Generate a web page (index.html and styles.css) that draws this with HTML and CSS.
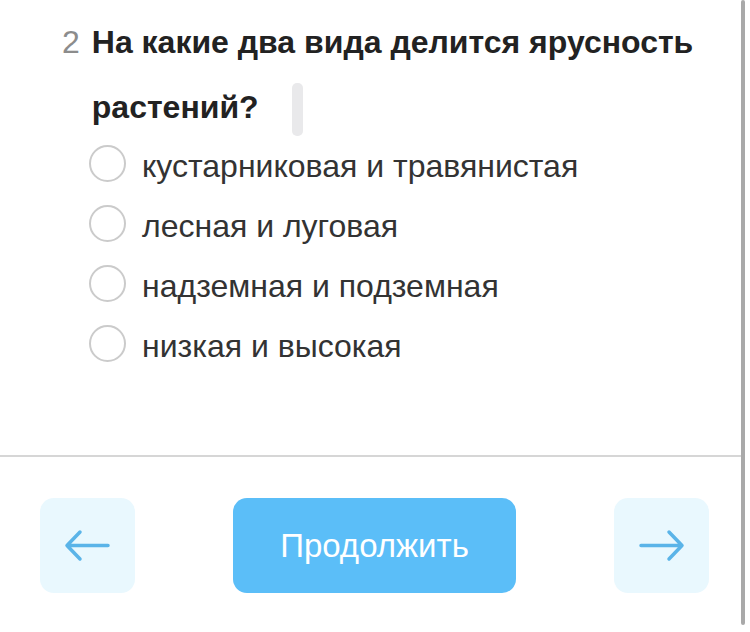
FILE: index.html
```html
<!DOCTYPE html>
<html lang="ru">
<head>
    <meta charset="UTF-8">
    <meta name="viewport" content="width=device-width, initial-scale=1.0">
    <title>Тест</title>
    <link rel="stylesheet" href="styles.css">
</head>
<body>

    <div class="quiz">
        <div class="question">
            <span class="question-num">2</span>
            <p class="question-text">На какие два вида делится ярусность растений?<span class="caret"></span></p>
        </div>

        <div class="answers">
            <label class="answer"><span class="radio"></span><span class="answer-text">кустарниковая и травянистая</span></label>
            <label class="answer"><span class="radio"></span><span class="answer-text">лесная и луговая</span></label>
            <label class="answer"><span class="radio"></span><span class="answer-text">надземная и подземная</span></label>
            <label class="answer"><span class="radio"></span><span class="answer-text">низкая и высокая</span></label>
        </div>
    </div>

    <div class="footer">
        <button class="nav-btn" aria-label="Назад">
            <svg width="95" height="95" viewBox="0 0 95 95">
                <path d="M27 47.5 H68 M40 34 L27 47.5 L40 61" fill="none" stroke="#5ab4e8" stroke-width="3.5" stroke-linecap="round" stroke-linejoin="round"/>
            </svg>
        </button>
        <button class="next-btn">Продолжить</button>
        <button class="nav-btn" aria-label="Вперёд">
            <svg width="95" height="95" viewBox="0 0 95 95">
                <path d="M27 47.5 H68 M55 34 L68 47.5 L55 61" fill="none" stroke="#5ab4e8" stroke-width="3.5" stroke-linecap="round" stroke-linejoin="round"/>
            </svg>
        </button>
    </div>

    <div class="scroll-thumb"></div>

</body>
</html>
```

FILE: styles.css
```css
body {
    margin: 0;
    font-family: 'Liberation Sans', Arial, sans-serif;
    background: #fff;
    color: #2b2b2b;
    width: 750px;
    height: 632px;
    overflow: hidden;
}
.quiz {
    padding: 10px 0 0 62px;
    height: 445px;
}
.question {
    display: flex;
    gap: 12px;
    font-size: 32px;
    line-height: 65px;
}
.question-num {
    color: #8c8c8c;
}
.question-text {
    margin: 0;
    font-weight: bold;
    color: #222;
    width: 640px;
}
.caret {
    display: inline-block;
    width: 11px;
    height: 53px;
    margin-left: 33px;
    border-radius: 5px;
    background: #e9e9eb;
    vertical-align: middle;
}
.answers {
    margin-top: -7px;
    padding-left: 27px;
}
.answer {
    display: flex;
    align-items: center;
    gap: 16px;
    height: 60px;
    font-size: 32px;
    color: #333;
}
.answer-text {
    padding-top: 6px;
}
.radio {
    width: 33px;
    height: 33px;
    border: 2px solid #cbcbcb;
    border-radius: 50%;
}
.footer {
    border-top: 2px solid #d6d6d6;
    width: 745px;
    height: 175px;
    box-sizing: border-box;
    padding: 41px 0 0 40px;
    display: flex;
    gap: 98px;
}
button {
    border: none;
    border-radius: 14px;
    padding: 0;
    cursor: pointer;
    font-family: 'Liberation Sans', Arial, sans-serif;
}
.nav-btn {
    width: 95px;
    height: 95px;
    background: #e9f8fe;
}
.nav-btn svg {
    display: block;
}
.next-btn {
    width: 283px;
    height: 95px;
    background: #5bbef8;
    color: #fff;
    font-size: 33px;
}
.scroll-thumb {
    position: absolute;
    top: 0;
    left: 741px;
    width: 4px;
    height: 625px;
    border-radius: 2px;
    background: #a9a9a9;
}
```
